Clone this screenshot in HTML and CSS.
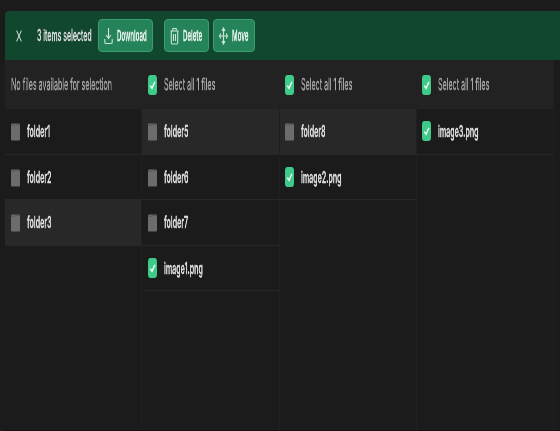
FILE: index.html
```html
<!DOCTYPE html>
<html lang="en">
<head>
<meta charset="utf-8">
<title>Files</title>
<link rel="stylesheet" href="styles.css">
</head>
<body>
<svg class="defs" width="0" height="0">
  <symbol id="check" viewBox="0 0 9 20"><rect width="9" height="20" rx="2.4" ry="3.8" fill="#3ecb8a"/><path d="M2.300 10.700 4 13.300 6.900 6.900" fill="none" stroke="#f2fff8" stroke-width="1.400"/></symbol>
  <symbol id="folder" viewBox="0 0 9 20"><path d="M0 4Q0 2.500.8 2.500H8.200Q9 2.900 9 4.500V18Q9 19.500 8.200 19.500H.8Q0 19.500 0 18Z" fill="#6c6c6c"/><path d="M.3 4.300H3.600L4.600 3.400H8.700" fill="none" stroke="#535353" stroke-width=".9"/></symbol>
</svg>
<div class="bar">
  <svg class="close" viewBox="0 0 6 12"><path d="M.6.6 5.400 11.400M5.400.6.6 11.400" fill="none" stroke="#d5e2db" stroke-width="1"/></svg>
  <div class="count"><span class="t">3 items selected</span></div>
  <div class="btn dl"><svg viewBox="0 0 9 18"><path d="M4.500 1V11M2.200 8 4.500 11.500 6.800 8M.8 12V15.300Q.8 16.500 1.700 16.500H7.300Q8.200 16.500 8.200 15.300V12" fill="none" stroke="#c9e6d8" stroke-width="1.100"/></svg><span class="t">Download</span></div>
  <div class="btn del"><svg viewBox="0 0 9 18"><path d="M.4 4H8.600M2.800 4V1.500H6.200V4M1.300 4V15.500Q1.300 17 2.200 17H6.800Q7.700 17 7.700 15.500V4M3.500 7V14M5.500 7V14" fill="none" stroke="#c9e6d8" stroke-width="1.100"/></svg><span class="t">Delete</span></div>
  <div class="btn mv"><svg viewBox="0 0 9 18"><path d="M4.500 1V17M.5 9H8.500M3 4 4.500 1 6 4M3 14 4.500 17 6 14M1.900 6.500.5 9 1.900 11.500M7.100 6.500 8.500 9 7.100 11.500" fill="none" stroke="#c9e6d8" stroke-width="1.100"/></svg><span class="t">Move</span></div>
</div>
<div class="cols">
  <div class="col">
    <div class="head"><span class="t">No files available for selection</span></div>
    <div class="row"><svg><use href="#folder"/></svg><span class="t">folder1</span></div>
    <div class="row"><svg><use href="#folder"/></svg><span class="t">folder2</span></div>
    <div class="row on"><svg><use href="#folder"/></svg><span class="t">folder3</span></div>
  </div>
  <div class="col">
    <div class="head"><svg><use href="#check"/></svg><span class="t">Select all 1 files</span></div>
    <div class="row on"><svg><use href="#folder"/></svg><span class="t">folder5</span></div>
    <div class="row"><svg><use href="#folder"/></svg><span class="t">folder6</span></div>
    <div class="row"><svg><use href="#folder"/></svg><span class="t">folder7</span></div>
    <div class="row"><svg><use href="#check"/></svg><span class="t">image1.png</span></div>
  </div>
  <div class="col">
    <div class="head"><svg><use href="#check"/></svg><span class="t">Select all 1 files</span></div>
    <div class="row on"><svg><use href="#folder"/></svg><span class="t">folder8</span></div>
    <div class="row"><svg><use href="#check"/></svg><span class="t">image2.png</span></div>
  </div>
  <div class="col">
    <div class="head"><svg><use href="#check"/></svg><span class="t">Select all 1 files</span></div>
    <div class="row"><svg><use href="#check"/></svg><span class="t">image3.png</span></div>
  </div>
</div>
</body>
</html>
```
FILE: styles.css
```css
body {
  margin: 0;
  width: 560px;
  height: 431px;
  overflow: hidden;
  box-sizing: border-box;
  padding: 11px 0 0 5px;
  background: #1b1b1b;
  color: #dedede;
  font: 600 16px Inter, sans-serif;
}
.defs { position: absolute; }

/* condensed labels */
.t {
  display: inline-block;
  white-space: nowrap;
  transform: scaleX(.44);
  transform-origin: 0 50%;
  will-change: transform;
  -webkit-text-stroke: .35px currentColor;
}

.bar {
  height: 49px;
  display: flex;
  align-items: center;
  background: #12472f;
  border-radius: 4px 0 0 0;
}
.close { width: 6px; height: 12px; margin-left: 11px; flex: none; }
.count { width: 61px; margin-left: 15px; flex: none; padding-bottom: 2px; font-weight: 500; }
.count .t { transform: scaleX(.436); }
.btn {
  height: 33px;
  box-sizing: border-box;
  flex: none;
  display: flex;
  align-items: center;
  padding-left: 5px;
  background: #25835a;
  border: 1px solid #3c9c72;
  border-radius: 4px;
}
.btn svg { width: 9px; height: 18px; flex: none; margin-right: 4px; }
.btn .t { width: 0; font-size: 15px; transform: scaleX(.41); color: #e2f0e9; }
.dl { width: 55px; }
.del { width: 45px; margin-left: 11px; }
.mv { width: 42px; margin-left: 4px; }

.cols {
  display: grid;
  grid-template-columns: repeat(4, 137.300px);
  height: 370px;
  border-bottom: 1px solid #121212;
}
.col { min-width: 0; border-right: 1px solid #202020; }
.head {
  height: 49px;
  display: flex;
  align-items: center;
  padding-left: 5.500px;
  background: #222;
  color: #a6a6a6;
  font-weight: 400;
}
.head .t { transform: scaleX(.445); margin-bottom: 2px; }
.row {
  height: 45.500px;
  box-sizing: border-box;
  display: flex;
  align-items: center;
  padding-left: 5.500px;
  border-bottom: 1px solid #272727;
}
.on { background: #282828; }
.row svg, .head svg { width: 9px; height: 20px; flex: none; margin-right: 7px; }
```
